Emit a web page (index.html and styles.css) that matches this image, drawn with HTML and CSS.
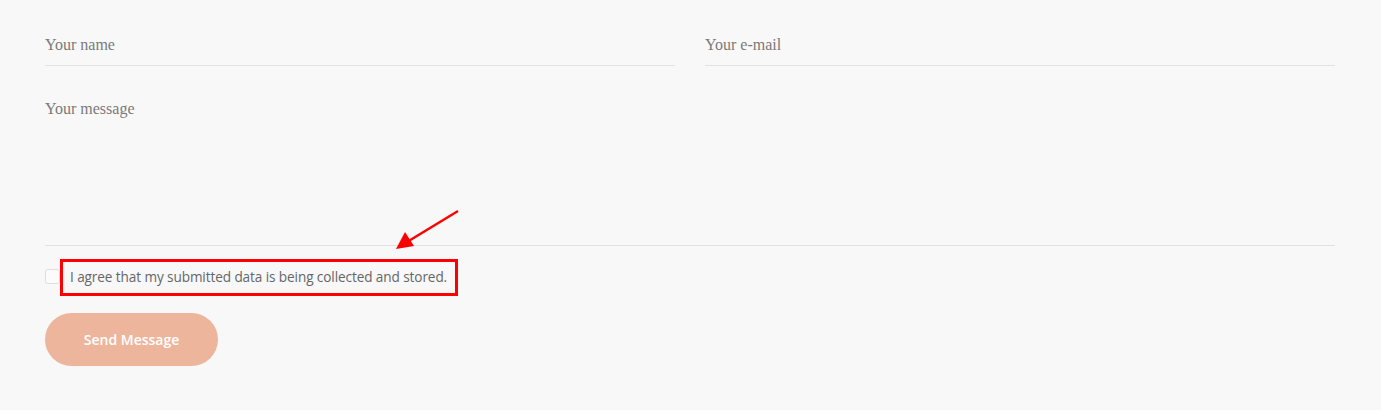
FILE: index.html
```html
<!DOCTYPE html>
<html>
<head>
<meta charset="utf-8">
<link rel="stylesheet" href="styles.css">
</head>
<body>
<form class="form">
  <div class="row">
    <div class="field"><span class="ph">Your name</span></div>
    <div class="field"><span class="ph">Your e-mail</span></div>
  </div>
  <div class="field message"><span class="ph">Your message</span></div>
  <div class="consent">
    <span class="box"></span>
    <span class="label">I agree that my submitted data is being collected and stored.</span>
    <span class="highlight"></span>
    <svg class="arrow" width="80" height="50" viewBox="0 0 80 50">
      <line x1="73" y1="2" x2="22" y2="33" stroke="#f00" stroke-width="2.5"/>
      <polygon points="11,40 20,23 29,37" fill="#f00"/>
    </svg>
  </div>
  <button type="button" class="send">Send Message</button>
</form>
</body>
</html>
```
FILE: styles.css
```css
html, body {
  margin: 0;
  padding: 0;
  background: #f8f8f8;
}
.form {
  padding: 28px 46px 0 45px;
  display: flex;
  flex-direction: column;
}
.row {
  display: flex;
  gap: 30px;
}
.row .field {
  flex: 1;
}
.field {
  border-bottom: 1px solid #e2e2e2;
  height: 38px;
  box-sizing: border-box;
}
.ph {
  font-family: "Liberation Serif", "Times New Roman", serif;
  font-size: 16px;
  color: #7a7a7a;
  line-height: 18px;
  display: block;
  padding-top: 8px;
}
.message {
  margin-top: 26px;
  height: 154px;
}
.consent {
  position: relative;
  display: flex;
  align-items: center;
  gap: 10px;
  margin-top: 22px;
  height: 16px;
}
.box {
  width: 13px;
  height: 13px;
  border: 1px solid #dedede;
  border-radius: 3px;
  background: #fbfbfb;
  flex: none;
}
.label {
  font-family: "Open Sans", "Noto Sans", sans-serif;
  font-size: 13.6px;
  color: #666;
  letter-spacing: -0.1px;
}
.highlight {
  position: absolute;
  left: 15px;
  top: -9px;
  width: 392px;
  height: 31px;
  border: 3px solid #f00;
}
.arrow {
  position: absolute;
  left: 340px;
  top: -59px;
}
.send {
  margin-top: 29px;
  width: 173px;
  height: 53px;
  border: none;
  border-radius: 27px;
  background: #eeb59d;
  color: #fff;
  font-family: "Open Sans", "Noto Sans", sans-serif;
  font-size: 14px;
  font-weight: 600;
  cursor: pointer;
}
```
